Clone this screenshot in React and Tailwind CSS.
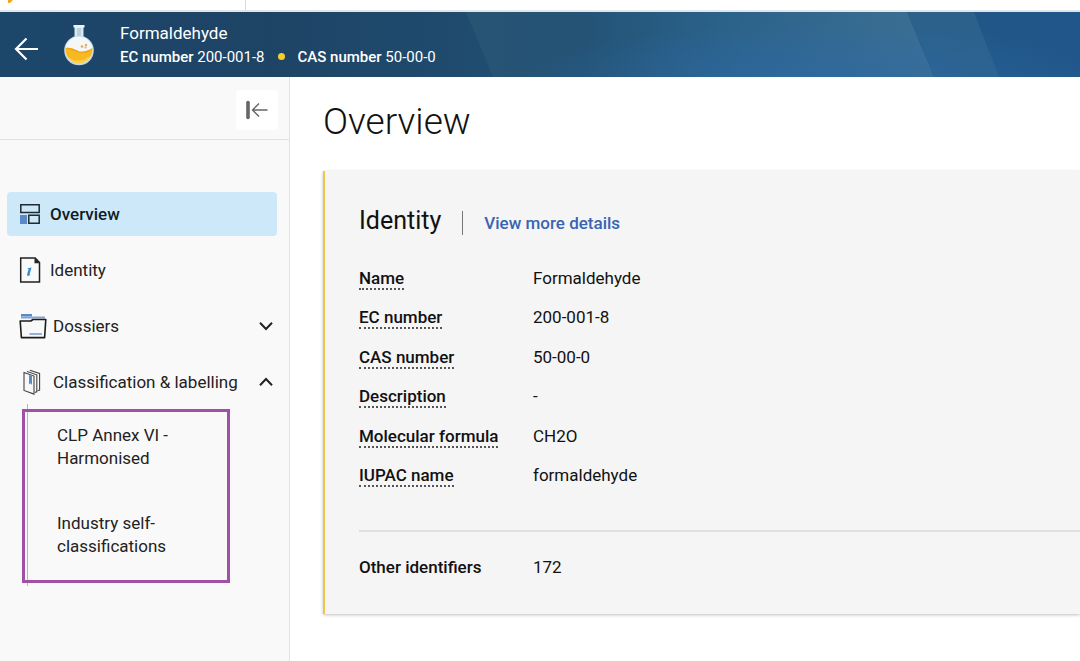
import React from "react";

const identity = [
  ["Name", "Formaldehyde"],
  ["EC number", "200-001-8"],
  ["CAS number", "50-00-0"],
  ["Description", "-"],
  ["Molecular formula", "CH2O"],
  ["IUPAC name", "formaldehyde"],
];

function FlaskIcon() {
  return (
    <svg width="32" height="42" viewBox="0 0 32 42" aria-hidden="true">
      <path d="M11.5 3h9v12h-9z" fill="#dbe8ee" />
      <path d="M14 4h4v11h-4z" fill="#b4d2e2" />
      <path d="M10.5 1h11v2.5h-11z" fill="#eef4f6" />
      <circle cx="16" cy="26.500" r="14.8" fill="#c3d9e4" />
      <circle cx="16" cy="26" r="13.6" fill="#f4f7f7" />
      <path d="M2.6 24Q8 23 14 26.500T29.4 24A13.500 13.500 0 1 1 2.600 24z" fill="#f8b920" />
      <path d="M2.6 24Q8 23 14 26.500T29.4 24Q26 29.500 20 29T2.600 24z" fill="#f1a21c" />
      <path d="M6 34q10 6 21-2-4 7.500-11 7.500T6 34z" fill="#fbd24a" />
      <circle cx="19" cy="22.500" r="1.3" fill="#eea44f" />
      <circle cx="23" cy="21" r="1.2" fill="#eea44f" />
      <circle cx="22.500" cy="23.500" r="1" fill="#eea44f" />
    </svg>
  );
}

function OverviewIcon() {
  return (
    <svg width="22" height="22" viewBox="0 0 22 22" fill="none" aria-hidden="true">
      <path d="M1 12h7v9H1z" fill="#5b8ac6" />
      <path d="M1.8 1.8h18.4v7.6H1.8zM9.8 12.3h10.4v7.9H9.8z" stroke="#1f2b33" strokeWidth="1.5" />
    </svg>
  );
}

function IdentityIcon() {
  return (
    <svg width="22" height="26" viewBox="0 0 22 26" fill="none" aria-hidden="true">
      <path d="M1.7 1h14.5l4.3 4.5V25H1.7z" stroke="#222" strokeWidth="1.5" />
      <path d="M15.5 1l5.2 5.2h-5.2z" fill="#222" />
      <path d="M8.6 11.2l4-.8-2 6.8q-.2.9 1.200-.2-1.500 2.200-3 1.900-1.100-.3-.6-1.900l1.300-4.500q.2-.8-.9-.7z" fill="#3a8dcc" />
    </svg>
  );
}

function FolderIcon() {
  return (
    <svg width="28" height="26" viewBox="0 0 28 26" fill="none" aria-hidden="true">
      <path d="M2 1h11v2.500H2z" fill="#5b8ac6" />
      <path d="M2 3.500h24v2H2z" fill="#7fa5d3" />
      <path
        d="M1.2 8h10.600l2.200-1.500h12.800l-1.200 18.100H2.400z"
        fill="#f8f8f8"
        stroke="#1c1c1c"
        strokeWidth="1.6"
        strokeLinejoin="round"
      />
      <path d="M10.5 21h12.5" stroke="#5b8ac6" strokeWidth="1.3" />
    </svg>
  );
}

function BooksIcon() {
  return (
    <svg width="18" height="26" viewBox="0 0 18 26" fill="none" stroke="#444" aria-hidden="true">
      <path d="M6.8 1.2l9.800 3.300v16.600l-2 .6" strokeWidth="1.1" />
      <path d="M4 2.4l9.800 3.400v17l-2 .6" strokeWidth="1.1" />
      <path d="M1 3.6l10 3.500v18L1 21.400z" fill="#f8f8f8" strokeWidth="1.1" />
      <path d="M6 6v9.500l1.500-1.300L9 16V7z" fill="#5b8ac6" stroke="none" />
    </svg>
  );
}

function Chevron({ up }) {
  return (
    <svg width="16" height="10" viewBox="0 0 16 10" fill="none" stroke="#222" strokeWidth="2" aria-hidden="true">
      <path d={up ? "M2 8.2L8 2l6 6.2" : "M2 1.8L8 8l6-6.2"} />
    </svg>
  );
}

function HeaderBackdrop() {
  return (
    <svg className="absolute inset-0 w-full h-full" viewBox="0 0 1080 65" preserveAspectRatio="none" aria-hidden="true">
      <defs>
        <linearGradient id="base" x1="0" x2="1">
          <stop offset="0" stopColor="#1c466b" />
          <stop offset="0.25" stopColor="#1e4465" />
          <stop offset="0.43" stopColor="#1f4b6e" />
          <stop offset="0.6" stopColor="#24587f" />
          <stop offset="1" stopColor="#20568a" />
        </linearGradient>
        <linearGradient id="beam" x1="0" x2="1">
          <stop offset="0" stopColor="#285473" />
          <stop offset="0.25" stopColor="#245377" />
          <stop offset="0.55" stopColor="#2b628a" />
          <stop offset="1" stopColor="#3d6f93" />
        </linearGradient>
        <radialGradient id="glow">
          <stop offset="0" stopColor="#2c6aa6" stopOpacity="0.7" />
          <stop offset="1" stopColor="#2c6aa6" stopOpacity="0" />
        </radialGradient>
      </defs>
      <rect width="1080" height="65" fill="url(#base)" />
      <path d="M466 0H907L934 65H493z" fill="url(#beam)" />
      <path d="M907 0H974L999 65H934z" fill="#2b618b" />
      <ellipse cx="820" cy="72" rx="300" ry="62" fill="url(#glow)" />
    </svg>
  );
}

const navItem = "flex w-full items-center h-11 pl-3 pr-[3px] rounded text-left";

function Sidebar() {
  return (
    <aside className="w-[290px] shrink-0 bg-[#f9f9f9] border-r border-[#e4e4e6]">
      <div className="flex justify-end items-center h-[63px] pr-[11px] pt-1 border-b border-[#e0e0e2]">
        <button type="button" aria-label="Collapse menu" className="flex items-center justify-center w-[42px] h-10 rounded bg-white">
          <svg width="24" height="20" viewBox="0 0 24 20" fill="none" stroke="#666" aria-hidden="true">
            <path d="M3 2.5v15" strokeWidth="3.6" strokeLinecap="round" />
            <path d="M22.5 10H7.5M14 3.5L7.5 10l6.5 6.5" strokeWidth="1.4" />
          </svg>
        </button>
      </div>
      <nav className="flex flex-col gap-3 pt-[52px] pl-[7px] pr-3">
        <a href="#overview" className={`${navItem} gap-[9px] bg-[#cde9f9] font-medium text-[#101c24]`}>
          <OverviewIcon />
          <span>Overview</span>
        </a>
        <a href="#identity" className={`${navItem} gap-[9px]`}>
          <IdentityIcon />
          <span>Identity</span>
        </a>
        <button type="button" aria-expanded="false" className={`${navItem} gap-[6px]`}>
          <FolderIcon />
          <span className="flex-1">Dossiers</span>
          <Chevron />
        </button>
        <div>
          <button type="button" aria-expanded="true" className={`${navItem} gap-3`}>
            <span className="pl-1">
              <BooksIcon />
            </span>
            <span className="flex-1 whitespace-nowrap">Classification &amp; labelling</span>
            <Chevron up />
          </button>
          <div className="relative ml-5 pl-[29px] border-l border-[#b4b4b4] pt-5 pb-7 leading-[23px]">
            <a href="#clp" className="block w-32">
              CLP Annex VI - Harmonised
            </a>
            <a href="#industry" className="block w-32 mt-[42px]">
              Industry self-classifications
            </a>
            <div className="absolute -left-1.5 top-[5px] bottom-[3px] w-[208px] border-3 border-[#a050a5] pointer-events-none" />
          </div>
        </div>
      </nav>
    </aside>
  );
}

function IdentityCard() {
  return (
    <section className="bg-[#f5f5f5] border-l-2 border-[#edc843] pl-[34px] shadow-[0_1px_3px_rgba(0,0,0,0.25)] text-[#111]">
      <div className="flex items-center pt-7 h-[71px]">
        <h2 className="text-[25px] leading-9">Identity</h2>
        <span className="w-px h-6 mx-[21px] mt-1 bg-[#777]" />
        <a href="#details" className="mt-1 font-medium text-[#3a64b0]">
          View more details
        </a>
      </div>
      <dl className="grid grid-rows-6 h-[237px] mt-4">
        {identity.map(([label, value]) => (
          <div key={label} className="flex items-center">
            <dt className="w-[174px] shrink-0 font-medium">
              <span className="inline-block leading-5 border-b-2 border-dotted border-[#555]">{label}</span>
            </dt>
            <dd>{value}</dd>
          </div>
        ))}
      </dl>
      <dl className="flex items-center h-[84px] mt-[35px] pb-3 border-t-2 border-[#e0e0e0]">
        <dt className="w-[174px] shrink-0 font-medium">Other identifiers</dt>
        <dd>172</dd>
      </dl>
    </section>
  );
}

function App() {
  return (
    <div className="flex flex-col min-h-screen overflow-x-hidden bg-white font-['Roboto',sans-serif] text-[17px] leading-6 text-[#222]">
      <div className="flex h-3 border-b-2 border-[#dfe5e8]">
        <div className="w-[246px] pl-2 border-r border-[#d8d8e0]">
          <svg width="5" height="3" viewBox="0 0 5 3" aria-hidden="true">
            <path d="M0 0h5L2 3H0z" fill="#f5a623" />
          </svg>
        </div>
      </div>

      <header className="relative h-[65px] text-white">
        <HeaderBackdrop />
        <div className="relative flex items-center h-full pl-[14px]">
          <button type="button" aria-label="Back" className="mt-2">
            <svg width="25" height="24" viewBox="0 0 25 24" fill="none" stroke="currentColor" strokeWidth="2.2" aria-hidden="true">
              <path d="M24 12H2.5M12.5 1.5L2 12l10.5 10.5" />
            </svg>
          </button>
          <span className="ml-6">
            <FlaskIcon />
          </span>
          <div className="ml-[25px]">
            <p>Formaldehyde</p>
            <p className="flex items-center text-[15px]">
              <span>
                <span className="font-medium">EC number</span> 200-001-8
              </span>
              <span className="w-[7px] h-[7px] mx-[13px] rounded-full bg-[#f3cf2e]" />
              <span>
                <span className="font-medium">CAS number</span> 50-00-0
              </span>
            </p>
          </div>
        </div>
      </header>

      <div className="flex flex-1">
        <Sidebar />
        <main className="flex-1 pl-[33px] pt-5">
          <h1 className="mb-6 text-[37px] leading-[50px] font-light text-[#111]">Overview</h1>
          <IdentityCard />
        </main>
      </div>
    </div>
  );
}

export default App;
